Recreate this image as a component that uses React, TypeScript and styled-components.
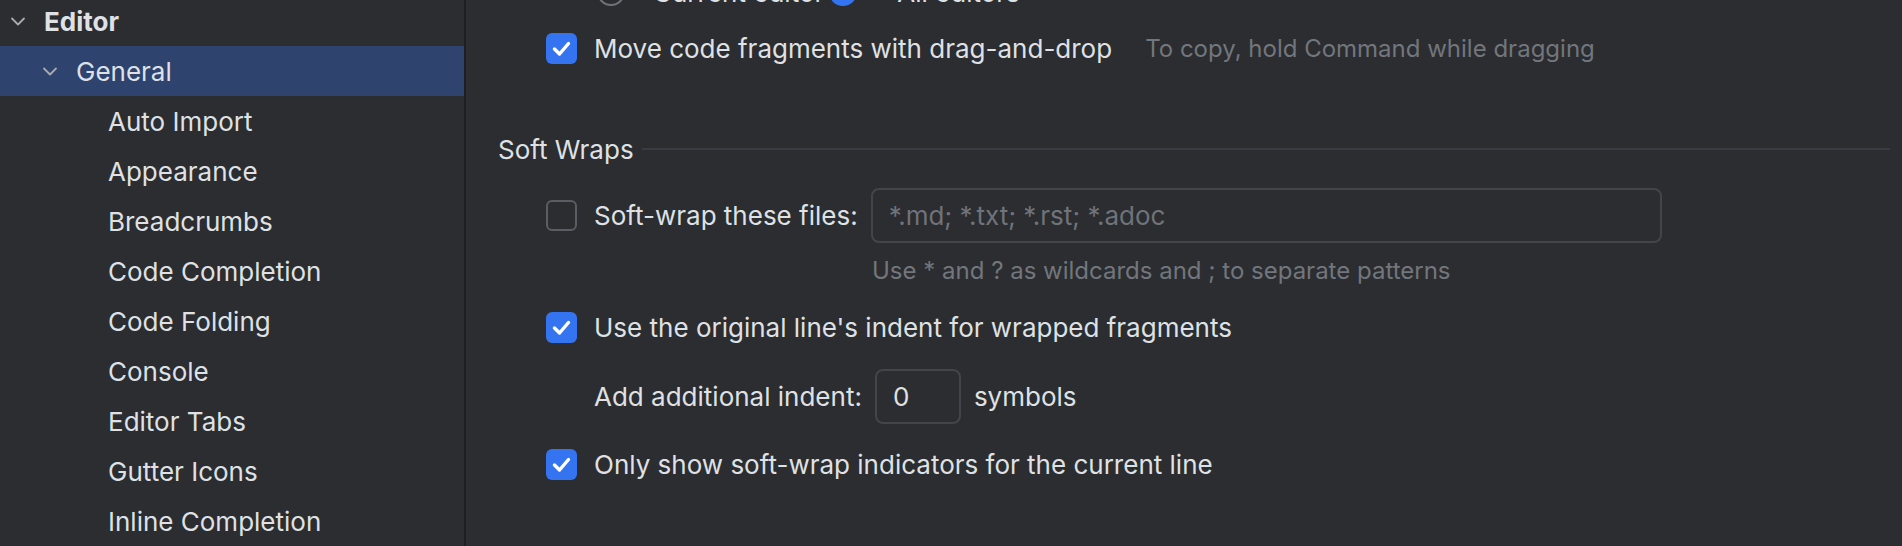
import React from "react";
import styled, { createGlobalStyle } from "styled-components";

const GlobalStyle = createGlobalStyle`
  html, body { margin: 0; padding: 0; background: #2b2d30; }
  body { font-family: Inter, "Noto Sans", "Liberation Sans", sans-serif; }
  * { box-sizing: border-box; }
`;

const Page = styled.div`
  display: flex;
  width: 1902px;
  height: 546px;
  overflow: hidden;
  background: #2b2d30;
  color: #dfe1e5;
  font-family: Inter, "Noto Sans", "Liberation Sans", sans-serif;
  font-size: 26px;
`;

const Sidebar = styled.nav`
  width: 464px;
  flex: none;
  height: 100%;
  overflow: hidden;
  background: #2b2d30;
`;

const TreeList = styled.div`
  display: flex;
  flex-direction: column;
  margin-top: -4px;
`;

const TreeRow = styled.div<{ $level: number; $selected?: boolean; $bold?: boolean }>`
  display: flex;
  align-items: center;
  height: 50px;
  padding-left: ${(p) => 10 + p.$level * 32}px;
  gap: 18px;
  background: ${(p) => (p.$selected ? "#2e436e" : "transparent")};
  font-weight: ${(p) => (p.$bold ? 700 : 400)};
  color: #dfe1e5;
  white-space: nowrap;
`;

const ChevronSlot = styled.span`
  width: 16px;
  height: 16px;
  flex: none;
  display: flex;
  align-items: center;
  justify-content: center;
`;

const Divider = styled.div`
  width: 2px;
  flex: none;
  background: #1e1f22;
`;

const Main = styled.main`
  flex: 1;
  height: 100%;
  overflow: hidden;
  padding: 0 12px 0 32px;
`;

const Content = styled.div`
  display: flex;
  flex-direction: column;
  margin-top: -33px;
`;

const Row = styled.div<{ $height: number; $top: number; $indent?: number; $gap?: number }>`
  display: flex;
  align-items: center;
  height: ${(p) => p.$height}px;
  margin-top: ${(p) => p.$top}px;
  padding-left: ${(p) => p.$indent ?? 48}px;
  gap: ${(p) => p.$gap ?? 17}px;
  white-space: nowrap;
`;

const Box = styled.span<{ $checked?: boolean }>`
  width: 31px;
  height: 31px;
  flex: none;
  border-radius: 6px;
  display: flex;
  align-items: center;
  justify-content: center;
  background: ${(p) => (p.$checked ? "#3574f0" : "transparent")};
  border: ${(p) => (p.$checked ? "none" : "2px solid #5a5d63")};
`;

const Radio = styled.span<{ $selected?: boolean }>`
  width: 28px;
  height: 28px;
  flex: none;
  border-radius: 50%;
  display: flex;
  align-items: center;
  justify-content: center;
  background: ${(p) => (p.$selected ? "#3574f0" : "transparent")};
  border: ${(p) => (p.$selected ? "none" : "2px solid #6f737a")};
  &::after {
    content: "";
    display: ${(p) => (p.$selected ? "block" : "none")};
    width: 10px;
    height: 10px;
    border-radius: 50%;
    background: #ffffff;
  }
`;

const RadioGroup = styled.div`
  display: flex;
  align-items: center;
  gap: 5px;
  margin-left: 51px;
`;

const RadioOption = styled.span<{ $gap: number }>`
  display: flex;
  align-items: center;
  gap: ${(p) => p.$gap}px;
`;

const Label = styled.span`
  color: #dfe1e5;
`;

const Hint = styled.span<{ $left?: number }>`
  color: #72767d;
  font-size: 24px;
  margin-left: ${(p) => p.$left ?? 0}px;
`;

const SectionHeader = styled.div`
  display: flex;
  align-items: center;
  height: 40px;
  margin-top: 56px;
  gap: 8px;
  color: #dfe1e5;
  white-space: nowrap;
`;

const SectionLine = styled.div`
  flex: 1;
  height: 2px;
  background: #393b40;
`;

const TextField = styled.div<{ $width: number }>`
  width: ${(p) => p.$width}px;
  height: 55px;
  border: 2px solid #43454a;
  border-radius: 8px;
  display: flex;
  align-items: center;
  padding-left: 16px;
  flex: none;
`;

const Placeholder = styled.span`
  color: #6f737a;
`;

const Value = styled.span`
  color: #dfe1e5;
`;

const Chevron = () => (
  <svg width="16" height="16" viewBox="0 0 16 16">
    <path d="M2 5.5 L8 11.5 L14 5.5" fill="none" stroke="#a8abb0" strokeWidth="1.8" strokeLinecap="round" strokeLinejoin="round" />
  </svg>
);

const Check = () => (
  <svg width="31" height="31" viewBox="0 0 31 31">
    <path d="M8.5 16 L13.5 21 L22.5 10.5" fill="none" stroke="#ffffff" strokeWidth="3.4" strokeLinecap="round" strokeLinejoin="round" />
  </svg>
);

const Checkbox = ({ checked }: { checked?: boolean }) => <Box $checked={checked}>{checked && <Check />}</Box>;

const tree: { label: string; level: number; expanded?: boolean; selected?: boolean; bold?: boolean }[] = [
  { label: "Editor", level: 0, expanded: true, bold: true },
  { label: "General", level: 1, expanded: true, selected: true },
  { label: "Auto Import", level: 2 },
  { label: "Appearance", level: 2 },
  { label: "Breadcrumbs", level: 2 },
  { label: "Code Completion", level: 2 },
  { label: "Code Folding", level: 2 },
  { label: "Console", level: 2 },
  { label: "Editor Tabs", level: 2 },
  { label: "Gutter Icons", level: 2 },
  { label: "Inline Completion", level: 2 },
];

export default function App() {
  return (
    <>
      <GlobalStyle />
      <Page>
        <Sidebar>
          <TreeList>
            {tree.map((t) => (
              <TreeRow key={t.label} $level={t.level} $selected={t.selected} $bold={t.bold}>
                <ChevronSlot>{t.expanded && <Chevron />}</ChevronSlot>
                <span>{t.label}</span>
              </TreeRow>
            ))}
          </TreeList>
        </Sidebar>
        <Divider />
        <Main>
          <Content>
            <Row $height={50} $top={0}>
              <RadioGroup>
                <RadioOption $gap={28}>
                  <Radio />
                  <Label>Current editor</Label>
                </RadioOption>
                <RadioOption $gap={40}>
                  <Radio $selected />
                  <Label>All editors</Label>
                </RadioOption>
              </RadioGroup>
            </Row>
            <Row $height={50} $top={6}>
              <Checkbox checked />
              <Label>Move code fragments with drag-and-drop</Label>
              <Hint $left={16}>To copy, hold Command while dragging</Hint>
            </Row>
            <SectionHeader>
              <span>Soft Wraps</span>
              <SectionLine />
            </SectionHeader>
            <Row $height={55} $top={19}>
              <Checkbox />
              <Label>Soft-wrap these files:</Label>
              <TextField $width={791} style={{ marginLeft: -4 }}>
                <Placeholder>*.md; *.txt; *.rst; *.adoc</Placeholder>
              </TextField>
            </Row>
            <Row $height={30} $top={12} $indent={374}>
              <Hint>Use * and ? as wildcards and ; to separate patterns</Hint>
            </Row>
            <Row $height={40} $top={22}>
              <Checkbox checked />
              <Label>Use the original line's indent for wrapped fragments</Label>
            </Row>
            <Row $height={54} $top={22} $indent={96} $gap={13}>
              <Label>Add additional indent:</Label>
              <TextField $width={86}>
                <Value>0</Value>
              </TextField>
              <Label>symbols</Label>
            </Row>
            <Row $height={40} $top={21}>
              <Checkbox checked />
              <Label>Only show soft-wrap indicators for the current line</Label>
            </Row>
          </Content>
        </Main>
      </Page>
    </>
  );
}
